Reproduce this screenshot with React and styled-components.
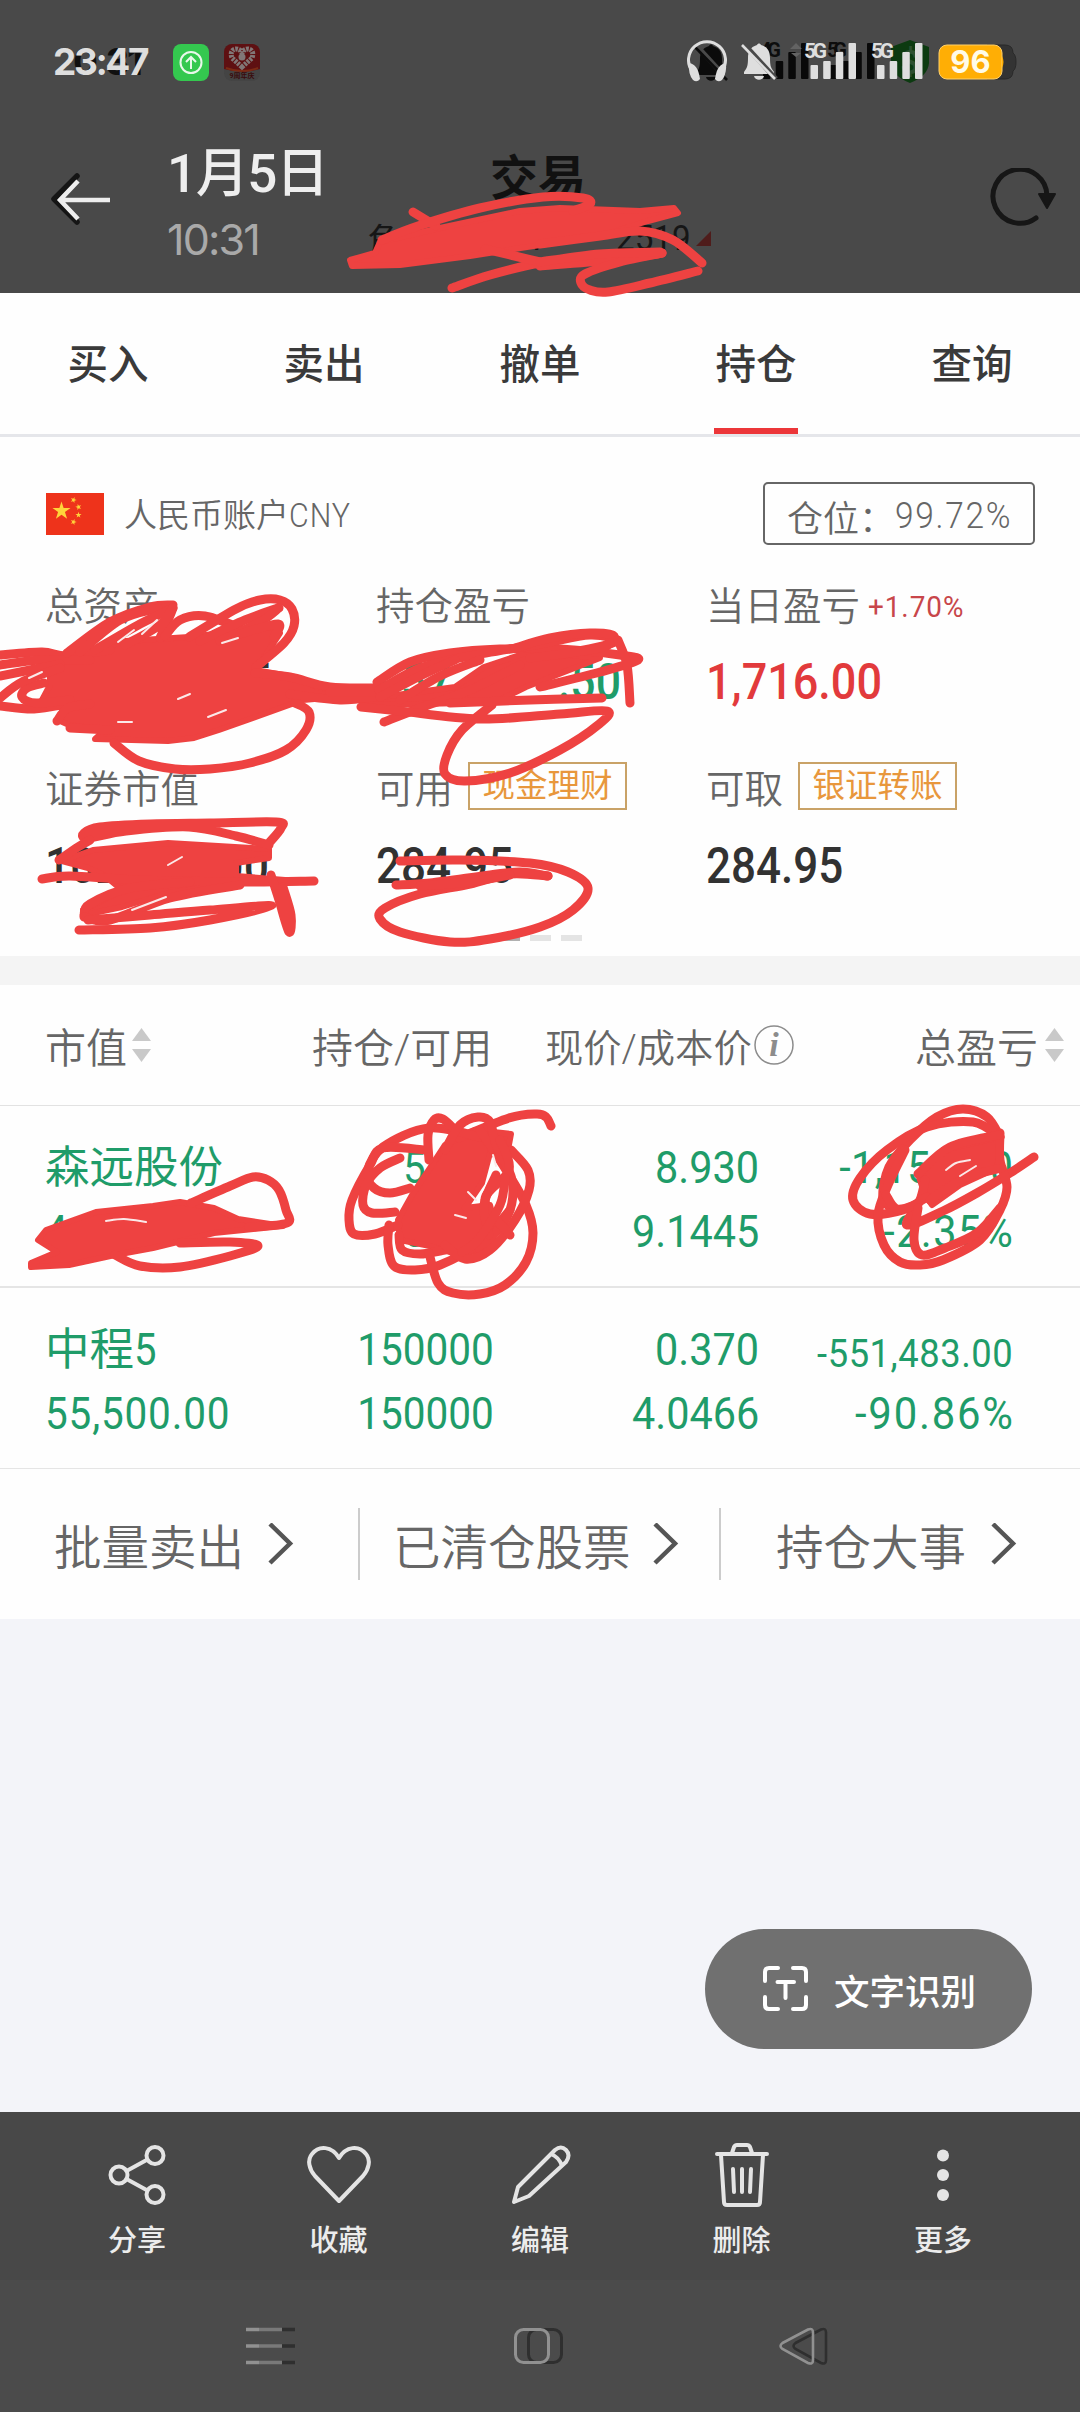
import React from 'react'
import styled, { createGlobalStyle } from 'styled-components'

const GlobalStyle = createGlobalStyle`
  * { box-sizing: border-box; }
  body {
    margin: 0;
    background: #f3f4f9;
    font-family: Roboto, 'Noto Sans CJK SC', sans-serif;
    color: #666;
  }
`;

const Phone = styled.div`
  position: relative;
  display: flex;
  flex-direction: column;
  width: 1080px;
  height: 2412px;
  overflow: hidden;
  background: #f3f4f9;
`;

const TopArea = styled.header`
  height: 293px;
  background: #494949;
`;

const StatusBar = styled.div`
  display: flex;
  align-items: center;
  height: 100px;
  padding: 24px 0 0 53px;
`;

const Clock = styled.div`
  position: relative;
  width: 120px;
  height: 50px;
  font: 700 37px/50px Inter, Roboto, sans-serif;
  letter-spacing: -2.4px;
  color: #dedede;
`;

const ClockShadow = styled.span`
  position: absolute;
  left: 20px;
  top: 0;
  color: #101010;
`;

const ClockFront = styled.span`
  position: relative;
`;

const AppIcon = styled.svg`
  display: block;
  margin-right: 15px;
`;

const StatusIcons = styled.svg`
  display: block;
  margin: 0 57px 0 auto;
`;

const TitleBar = styled.div`
  display: flex;
  height: 193px;
`;

const BackIcon = styled.svg`
  margin: 70px 0 0 48px;
`;

const DateBox = styled.div`
  width: 200px;
  margin: 44px 0 0 50px;
`;

const DateText = styled.div`
  font-size: 53px;
  font-weight: 500;
  line-height: 60px;
  letter-spacing: -1.4px;
  color: #eee;
  white-space: nowrap;
`;

const TimeText = styled.div`
  margin-top: 9px;
  font: 400 43px/52px Inter, Roboto, sans-serif;
  letter-spacing: -1.8px;
  color: #a9a9a9;
`;

const TitleBox = styled.div`
  width: 350px;
  margin: 51px 0 0 0;
`;

const Title = styled.div`
  padding-left: 123px;
  font-size: 48px;
  font-weight: 700;
  line-height: 56px;
  color: #111;
`;

const AccountNo = styled.div`
  display: flex;
  align-items: center;
  height: 50px;
  margin-top: 6px;
  font-size: 35px;
  font-weight: 400;
  color: #161616;
`;

const AccountPart = styled.span`
  width: ${(p) => p.$w}px;
  white-space: nowrap;
`;

const RefreshIcon = styled.svg`
  margin: 68px 0 0 273px;
`;

const Tabs = styled.nav`
  display: grid;
  grid-template-columns: repeat(5, 1fr);
  height: 144px;
  background: #fefefe;
  border-bottom: 3px solid #e5e6ea;
`;

const Tab = styled.div`
  display: flex;
  flex-direction: column;
  align-items: center;
  padding-top: 46px;
  font-size: 40.5px;
  font-weight: 500;
  line-height: 52px;
  color: #3a3a3a;
  &::after {
    content: '';
    width: 84px;
    height: 6px;
    margin-top: auto;
    background: ${(p) => (p.$active ? '#ec3639' : 'transparent')};
  }
`;

const Account = styled.section`
  height: 519px;
  padding: 45px 45px 0 46px;
  background: #fefefe;
`;

const AccountHead = styled.div`
  display: flex;
  align-items: center;
  height: 63px;
`;

const Currency = styled.span`
  margin: 4px auto 0 20px;
  font-size: 33px;
  line-height: 40px;
  font-weight: 350;
`;

const Position = styled.div`
  display: flex;
  align-items: center;
  width: 272px;
  height: 63px;
  padding: 4px 0 0 22px;
  border: 2px solid #666;
  border-radius: 5px;
  font-size: 36px;
  font-weight: 350;
  white-space: nowrap;
`;

const Figures = styled.div`
  display: grid;
  grid-template-columns: 331px 330px 1fr;
  grid-template-rows: 42px 115px 94px 65px;
  margin-left: -1px;
  padding-top: 37px;
`;

const Label = styled.div`
  display: flex;
  align-items: center;
  font-size: 38.5px;
  font-weight: 350;
  white-space: nowrap;
`;

const Change = styled.span`
  margin: 6px 0 0 8px;
  font-size: 30px;
  font-weight: 400;
  color: #c8464a;
`;

const Badge = styled.span`
  width: 159px;
  height: 48px;
  margin-left: 15px;
  border: 2px solid #c9a267;
  font-size: 32.5px;
  font-weight: 400;
  line-height: 45px;
  text-align: center;
  color: #e8973c;
`;

const Value = styled.div`
  display: flex;
  align-items: center;
  font-size: 50px;
  font-weight: 500;
  color: ${(p) => p.$color || '#323232'};
  white-space: pre;
`;

// narrow figures, squeezed towards the edge they are aligned to
const Num = styled.span`
  display: inline-block;
  letter-spacing: ${(p) => p.$gap || 0}px;
  margin-right: -${(p) => p.$gap || 0}px;
  transform: scaleX(${(p) => p.$x || 0.89});
  transform-origin: ${(p) => p.$from || 'left'} center;
`;

const Digits = styled.span`
  width: ${(p) => p.$w}px;
`;

const Pager = styled.div`
  display: flex;
  justify-content: center;
  gap: 10px;
  margin-top: 37px;
  span {
    width: 21px;
    height: 6px;
    background: #e4e4e4;
  }
  span:first-child { background: #b0b0b0; }
`;

const Gap = styled.div`
  height: 29px;
  background: #f4f4f4;
`;

const TableHead = styled.div`
  display: grid;
  grid-template-columns: 267px 233px 370px 1fr;
  align-items: center;
  height: 121px;
  padding-left: 45px;
  background: #fefefe;
  border-bottom: 1px solid #e2e2e2;
  font-size: 41px;
  font-weight: 350;
`;

const HeadCell = styled.div`
  display: flex;
  align-items: center;
  font-size: ${(p) => p.$size || 41}px;
  white-space: nowrap;
  svg { margin-left: ${(p) => p.$gap || 4}px; }
`;

const HoldingRow = styled.div`
  display: grid;
  grid-template-columns: 230px 219px 265px 254px;
  grid-template-rows: 64px 64px;
  align-items: center;
  height: ${(p) => p.$h}px;
  padding: ${(p) => p.$top}px 0 0 45px;
  background: #fefefe;
  border-bottom: ${(p) => p.$line}px solid #e5e5e5;
  font-size: 45px;
  line-height: 64px;
  color: #1f9c69;
`;

const Cell = styled.div`
  padding-top: ${(p) => p.$drop || 0}px;
  text-align: ${(p) => p.$align || 'right'};
  font-size: ${(p) => p.$size || 45}px;
  white-space: pre;
`;

const Links = styled.div`
  display: flex;
  align-items: center;
  height: 150px;
  background: #fefefe;
`;

const LinkItem = styled.div`
  display: flex;
  align-items: center;
  justify-content: space-between;
  width: ${(p) => p.$w}px;
  height: 72px;
  padding: 0 ${(p) => p.$right}px 0 ${(p) => p.$left}px;
  border-right: ${(p) => (p.$last ? 0 : 2)}px solid #ccc;
  font-size: 47.5px;
  font-weight: 350;
  white-space: nowrap;
`;

const OcrButton = styled.div`
  position: absolute;
  left: 705px;
  top: 1929px;
  display: flex;
  align-items: center;
  width: 327px;
  height: 120px;
  padding-left: 57px;
  border-radius: 60px;
  background: #707070;
  color: #fff;
  font-size: 35.5px;
  font-weight: 500;
  span { margin: 0 0 0 25px; }
`;

const Toolbar = styled.div`
  display: grid;
  grid-template-columns: repeat(5, 201.5px);
  justify-content: center;
  height: 168px;
  margin-top: auto;
  background: #484848;
`;

const Tool = styled.div`
  display: flex;
  flex-direction: column;
  align-items: center;
  padding-top: 28px;
  font-size: 29px;
  font-weight: 500;
  line-height: 36px;
  color: #ececec;
  svg { margin-bottom: 15px; }
`;

const NavBar = styled.div`
  display: flex;
  align-items: center;
  height: 132px;
  padding-left: 240px;
  background: #4b4b4b;
`;

const NavIcon = styled.svg`
  margin-right: ${(p) => p.$gap || 0}px;
`;

const Scribbles = styled.svg`
  position: absolute;
  left: 0;
  top: 0;
  pointer-events: none;
`;

const RED = '#e23a3c';
const INK = '#ee4241';

const tabs = ['买入', '卖出', '撤单', '持仓', '查询'];

// smooth curve through a flat list of x, y
const curve = (p) => {
  const pt = (i) => {
    const n = Math.max(0, Math.min(p.length / 2 - 1, i));
    return [p[n * 2], p[n * 2 + 1]];
  };
  let d = `M${p[0]} ${p[1]}`;
  for (let i = 0; i < p.length / 2 - 1; i++) {
    const [a, b, c, e] = [pt(i - 1), pt(i), pt(i + 1), pt(i + 2)];
    d += `C${b[0] + (c[0] - a[0]) / 6} ${b[1] + (c[1] - a[1]) / 6} ${c[0] - (e[0] - b[0]) / 6} ${c[1] - (e[1] - b[1]) / 6} ${c[0]} ${c[1]}`;
  }
  return d;
};

const pen = [
  // account number
  [413, 212, 436, 226],
  [382, 240, 418, 226, 480, 208, 543, 197, 583, 198, 590, 204, 573, 211],
  [540, 244, 600, 236, 640, 231, 673, 240, 702, 263],
  [452, 288, 490, 275, 540, 263, 600, 256, 662, 253, 610, 260, 540, 266],
  [662, 253, 620, 262, 585, 274, 581, 283, 590, 290, 608, 292, 650, 283, 698, 271],
  [485, 249, 540, 262],
  [540, 262, 600, 254, 660, 252],
  // total assets
  [0, 655, 42, 652, 67, 656, 110, 650],
  [0, 665, 40, 660, 90, 660],
  [0, 676, 60, 664],
  [0, 706, 34, 709, 67, 704],
  [44, 683, 27, 688, 22, 697, 36, 703, 70, 700],
  [0, 698, 22, 682, 60, 668],
  [67, 653, 110, 622, 150, 607, 173, 605],
  [80, 652, 120, 620, 158, 608],
  [95, 650, 140, 624, 173, 608],
  [125, 645, 160, 625, 173, 608, 160, 638],
  [165, 636, 180, 620, 205, 616, 240, 628],
  [189, 637, 236, 609, 260, 600, 280, 600, 292, 609, 294, 626, 284, 643, 256, 667],
  [200, 641, 245, 620, 278, 608],
  [220, 641, 260, 622, 279, 608],
  [240, 634, 278, 624, 274, 637],
  [114, 743, 139, 761, 175, 769, 210, 769, 250, 763, 286, 750, 306, 730, 309, 712, 295, 703],
  [255, 673, 290, 677, 330, 687, 379, 688],
  [290, 694, 340, 700, 380, 696],
  [330, 692, 380, 692],
  [57, 721, 68, 708, 90, 704],
  [70, 728, 110, 730],
  // floating profit
  [377, 682, 410, 662, 450, 653, 500, 649, 560, 649, 620, 655, 638, 660, 600, 672, 540, 687],
  [379, 690, 420, 668, 470, 656, 540, 644, 590, 635, 615, 642, 560, 655],
  [515, 648, 550, 638, 590, 633, 614, 636, 600, 648, 530, 658],
  [384, 722, 420, 708, 470, 690, 520, 665],
  [380, 697, 420, 676, 455, 660],
  [400, 700, 440, 676, 480, 660],
  [618, 640, 627, 665, 630, 703],
  [361, 707, 400, 711, 480, 719, 560, 714, 607, 711, 598, 725, 560, 750, 510, 773, 465, 781, 445, 774, 447, 755, 462, 730, 492, 705],
  [450, 703, 530, 700, 602, 698],
  // market value
  [269, 845, 236, 836, 189, 827, 126, 831, 88, 838, 84, 833, 100, 827, 150, 824, 210, 823, 276, 822, 281, 828, 269, 843],
  [59, 860, 78, 847, 90, 840],
  [42, 879, 70, 876, 140, 880, 240, 882, 314, 881],
  [84, 915, 90, 904, 130, 888, 190, 882],
  [84, 917, 110, 920, 170, 898, 240, 885],
  [88, 920, 150, 915, 210, 910, 272, 906, 210, 920, 150, 928, 79, 930],
  [271, 875, 279, 900, 289, 932, 291, 915, 283, 887],
  // available
  [400, 861, 460, 860, 530, 863, 568, 872, 588, 888, 573, 910, 540, 927, 490, 939, 450, 942, 400, 932, 380, 919, 385, 908, 420, 894, 470, 884, 510, 874, 548, 876],
  [396, 885, 430, 883, 490, 875, 520, 872, 548, 876],
  [420, 886, 470, 882, 510, 875],
  // first holding
  [191, 1203, 230, 1186, 253, 1177, 268, 1180, 279, 1190, 286, 1210, 287, 1223, 249, 1227],
  [115, 1255, 140, 1266, 180, 1267, 230, 1256, 258, 1246, 230, 1242, 180, 1243],
  // quantity
  [551, 1126, 546, 1117, 536, 1114, 509, 1118, 459, 1138],
  [480, 1137, 429, 1128, 383, 1147, 367, 1173, 374, 1188, 390, 1193, 410, 1188],
  [425, 1150, 383, 1148, 370, 1165, 352, 1200, 349, 1220, 354, 1234, 375, 1234, 398, 1225],
  [400, 1158, 380, 1168, 366, 1185, 363, 1205, 372, 1213, 395, 1212],
  [389, 1225, 388, 1245, 394, 1266, 415, 1270, 440, 1265, 480, 1243, 510, 1210],
  [399, 1235, 402, 1250, 420, 1254, 445, 1250],
  [429, 1253, 438, 1283, 453, 1293, 480, 1294, 505, 1285, 526, 1262, 533, 1233, 526, 1205, 506, 1170, 480, 1130],
  [429, 1160, 428, 1135, 434, 1120, 443, 1119, 455, 1130],
  [445, 1150, 460, 1125, 478, 1117, 490, 1122, 496, 1145, 512, 1180, 508, 1215, 480, 1250],
  [511, 1150, 528, 1170, 529, 1190, 515, 1220, 490, 1250, 465, 1259, 445, 1245],
  [500, 1140, 509, 1170, 485, 1200, 510, 1235],
  [496, 1175, 484, 1205, 489, 1235],
  [505, 1178, 500, 1205, 478, 1240, 462, 1252],
  // first holding profit
  [1034, 1157, 1010, 1173, 977, 1193, 943, 1211, 907, 1225, 920, 1200, 925, 1180],
  [1000, 1137, 987, 1117, 963, 1109, 937, 1117, 910, 1140, 889, 1167, 883, 1198, 895, 1211],
  [1000, 1137, 973, 1122, 927, 1127, 887, 1150, 860, 1178, 853, 1200, 870, 1214, 903, 1210, 927, 1197],
  [905, 1150, 888, 1185, 878, 1215, 884, 1245, 900, 1262, 920, 1265, 943, 1260, 980, 1240, 1000, 1210, 1007, 1187, 1000, 1160, 1000, 1133],
  [886, 1195, 897, 1209, 918, 1204],
  [918, 1208, 914, 1240, 922, 1255, 945, 1248, 977, 1233, 1000, 1208],
  [918, 1174, 950, 1147, 998, 1135],
  [930, 1200, 965, 1178, 1002, 1168],
];

const solid = [
  '380,242 440,228 520,211 560,208 640,211 674,208 678,213 648,221 600,236 540,245 470,256 400,265 352,266 350,260 375,253',
  '50,662 126,641 189,637 274,627 280,633 269,650 255,670 295,677 320,688 375,690 379,697 337,697 303,700 253,718 219,730 194,738 168,741 95,739 105,730 69,725 58,720 67,710 42,700 50,685',
  '455,687 484,667 526,653 570,655 600,658 526,687 500,700 463,703 379,705 362,703 382,697',
  '62,861 93,850 168,843 269,849 269,858 236,863 236,876 310,882 236,883 168,893 122,907 84,915 83,910 122,890 105,876 88,868',
  '46,1230 96,1212 153,1206 180,1202 214,1208 238,1219 283,1226 214,1233 153,1248 115,1255 69,1265 31,1267 31,1263 57,1252 38,1240',
  '445,1145 475,1130 511,1134 508,1150 490,1153 482,1183 465,1208 490,1205 495,1225 480,1250 459,1255 430,1246 400,1240 398,1220 412,1195 430,1168',
  '918,1174 943,1150 995,1138 1000,1150 997,1168 960,1185 932,1205 925,1195',
];

// slivers of paper left between the strokes
const gaps = [
  [118, 642, 134, 630],
  [142, 634, 157, 620],
  [222, 643, 238, 638],
  [178, 699, 190, 694],
  [118, 722, 132, 722],
  [29, 678, 42, 672],
  [208, 717, 226, 710],
  [132, 910, 166, 897],
  [168, 865, 182, 857],
  [106, 1221, 124, 1219, 146, 1222],
  [468, 1192, 476, 1200],
  [493, 1155, 496, 1166],
  [455, 1215, 466, 1218],
  [946, 1170, 956, 1163, 970, 1160],
  [960, 1176, 976, 1166],
];

const Sort = () => (
  <svg width="19" height="34" viewBox="0 0 19 34" fill="#c9c9c9">
    <path d="M9.500 0L19 13H0z" />
    <path d="M0 21h19L9.500 34z" />
  </svg>
)

const Chevron = () => (
  <svg width="26" height="42" viewBox="0 0 26 42" fill="none" stroke="#555" strokeWidth="4.500">
    <path d="M2 1L22 20.500L2 40" />
  </svg>
)

const Star = ({ x, y, s, r = 0 }) => (
  <path
    transform={`translate(${x} ${y}) rotate(${r}) scale(${s})`}
    d="M0-1L.225-.309H.951L.363.118L.588.809L0 .382L-.588.809L-.363.118L-.951-.309H-.225z"
  />
)

const Bars = ({ x, fill }) => (
  <g fill={fill}>
    <rect x={x} y="26" width="7.500" height="14" rx="1" />
    <rect x={x + 12.700} y="22" width="7.500" height="18" rx="1" />
    <rect x={x + 25.300} y="13" width="7.500" height="27" rx="1" />
    <rect x={x + 38} y="4" width="7.500" height="36" rx="1" />
  </g>
)

const Bell = ({ fill, line }) => (
  <g>
    <path fill={fill} d="M15 2C8 4 6 9 6 15c0 8-1 10-4 14v2h30v-2c-3-4-4-6-4-14c0-6-2-11-9-13c-1-2-3-2-4 0zM12 33h10c-1 5-9 5-10 0z" />
    <path d="M1 0L34 36" stroke="#494949" strokeWidth="5" />
    <path d="M0 2L33 36" stroke={line} strokeWidth="2.600" />
  </g>
)

const App = () => {
  return (
    <Phone>
      <GlobalStyle />
      <TopArea>
        <StatusBar>
          <Clock>
            <ClockShadow>0:31</ClockShadow>
            <ClockFront>23:47</ClockFront>
          </Clock>
          <AppIcon width="36" height="37" viewBox="0 0 36 37">
            <rect width="36" height="37" rx="8" fill="#34c84f" />
            <g fill="none" stroke="#e8f8ea" strokeWidth="2">
              <circle cx="18" cy="18.500" r="10.500" />
              <path d="M18 25V13M13 18l5-5l5 5" />
            </g>
          </AppIcon>
          <AppIcon width="36" height="37" viewBox="0 0 36 37">
            <rect width="36" height="37" rx="8" fill="#444" />
            <path d="M0 25V8a8 8 0 0 1 8-8h20a8 8 0 0 1 8 8v17q-18 5-36 0z" fill="#5e1012" />
            <path d="M2 24q16 6 32 0" stroke="#7c2a14" strokeWidth="2" fill="none" />
            <path d="M18 23L8 14C6 9 8 5 12 5q4 0 6 4q2-4 6-4c4 0 6 4 4 9z" fill="none" stroke="#817777" strokeWidth="5" strokeDasharray="2.500 1" />
            <circle cx="18" cy="13" r="3.500" fill="#817777" />
            <text x="18" y="34" fontSize="7" fontWeight="700" textAnchor="middle" fill="#3a0b0c">9周年庆</text>
          </AppIcon>
          <StatusIcons width="336" height="46" viewBox="0 0 336 46">
            <g transform="translate(7 5)"><Bell fill="#0b0b0b" line="#0b0b0b" /></g>
            <g fontFamily="Roboto" fontWeight="700" fontSize="20" fill="#0d0d0d">
              <text x="73" y="18" textLength="21">4G</text>
              <text x="140" y="18" textLength="20">5G</text>
            </g>
            <Bars x={76} fill="#090909" />
            <Bars x={142} fill="#090909" />
            <path d="M103 10l6-6l6 6zM104 14h10l-5 4z" fill="#636363" />
            <path d="M223 1l19 7v16q-1 13-19 20q-18-7-19-20V8z" fill="#0c3a10" />
            <text x="223" y="35" fontSize="34" fontWeight="700" textAnchor="middle" fill="#2d5030">$</text>
            <path d="M5 32a18.500 18.500 0 1 1 30 0" fill="none" stroke="#dedede" strokeWidth="3" />
            <path d="M2 24q9 1 11 16q-3 4-7 1q-5-6-4-17zM39 24q-9 1-11 16q3 4 7 1q5-6 4-17z" fill="#dedede" />
            <g transform="translate(55 4)"><Bell fill="#dedede" line="#dedede" /></g>
            <g fontFamily="Roboto" fontWeight="700" fontSize="21" fill="#dedede">
              <text x="117" y="19" textLength="23">5G</text>
              <text x="184" y="19" textLength="23">5G</text>
            </g>
            <Bars x={123.500} fill="#dedede" />
            <Bars x={190} fill="#dedede" />
            <path d="M300 6h18q8 0 8 8q3 2 3 9t-3 9q0 8-8 8h-18z" fill="#333" stroke="#292929" />
            <rect x="252" y="6" width="63" height="34" rx="8" fill="#ffae05" stroke="#ffd06a" />
            <path d="M315 17q3 6 0 12z" fill="#ffae05" />
            <text x="283.500" y="34" fontFamily="Inter" fontSize="31" fontWeight="700" textAnchor="middle" fill="#fffbe8">96</text>
          </StatusIcons>
        </StatusBar>
        <TitleBar>
          <BackIcon width="69" height="58" viewBox="0 0 69 58" fill="none">
            <path d="M29 6L6 29L29 52" stroke="#151515" strokeWidth="5.500" strokeLinecap="round" strokeLinejoin="round" />
            <path d="M30 11L12 30L30 49M12 30H62" stroke="#eee" strokeWidth="4.500" />
          </BackIcon>
          <DateBox>
            <DateText>1月5日</DateText>
            <TimeText>10:31</TimeText>
          </DateBox>
          <TitleBox>
            <Title>交易</Title>
            <AccountNo>
              <AccountPart $w={139}>角</AccountPart>
              <AccountPart $w={110}>51</AccountPart>
              <AccountPart $w={80}><Num $x={0.95}>2519</Num></AccountPart>
              <svg width="15" height="15"><path d="M15 0V15H0z" fill="#4f1c1b" /></svg>
            </AccountNo>
          </TitleBox>
          <RefreshIcon width="70" height="66" viewBox="0 0 70 66">
            <path d="M57 28A27 27 0 1 0 46 50" fill="none" stroke="#161616" strokeWidth="5" strokeLinecap="round" />
            <path d="M49 26H65L57 40z" fill="#161616" stroke="#161616" strokeWidth="2" strokeLinejoin="round" />
          </RefreshIcon>
        </TitleBar>
      </TopArea>

      <Tabs>
        {tabs.map((item) => (
          <Tab key={item} $active={item === '持仓'}>{item}</Tab>
        ))}
      </Tabs>

      <Account>
        <AccountHead>
          <svg width="58" height="42" viewBox="0 0 58 42">
            <rect width="58" height="42" fill="#ee331b" />
            <g fill="#ffd43a">
              <Star x={15.500} y={18} s={9.500} />
              <Star x={27.500} y={7} s={3.200} r={20} />
              <Star x={32.500} y={14} s={3.200} r={-15} />
              <Star x={32.500} y={22} s={3.200} />
              <Star x={27.500} y={29} s={3.200} r={20} />
            </g>
          </svg>
          <Currency>人民币账户<Num $x={0.92} $gap={1}>CNY</Num></Currency>
          <Position>仓位：<Num $x={0.93} $gap={1.800}>99.72%</Num></Position>
        </AccountHead>
        <Figures>
          <Label>总资产</Label>
          <Label>持仓盈亏</Label>
          <Label>当日盈亏<Change><Num $x={0.93} $gap={1}>+1.70%</Num></Change></Label>
          <Value>
            <Digits $w={84}><Num>1</Num></Digits>
            <Digits $w={117}><Num>5</Num></Digits>
            <Num>5</Num>
          </Value>
          <Value $color="#1f9c69">
            <Digits $w={25}><Num>-</Num></Digits>
            <Digits $w={157}><Num>57,</Num></Digits>
            <Num>.50</Num>
          </Value>
          <Value $color={RED}><Num $x={0.9}>1,716.00</Num></Value>
          <Label>证券市值</Label>
          <Label>可用<Badge>现金理财</Badge></Label>
          <Label>可取<Badge>银证转账</Badge></Label>
          <Value>
            <Digits $w={161}><Num>102,</Num></Digits>
            <Num>.00</Num>
          </Value>
          <Value><Num $x={0.88}>284.95</Num></Value>
          <Value><Num $x={0.88}>284.95</Num></Value>
        </Figures>
        <Pager><span /><span /><span /></Pager>
      </Account>

      <Gap />

      <TableHead>
        <HeadCell $gap={5}>市值<Sort /></HeadCell>
        <HeadCell>持仓/可用</HeadCell>
        <HeadCell $gap={2} $size={38.3}>
          现价/成本价
          <svg width="40" height="40" viewBox="0 0 40 40">
            <circle cx="20" cy="20" r="19" fill="none" stroke="#8c8c8c" strokeWidth="1.500" />
            <text x="20" y="31" fontFamily="Liberation Serif" fontStyle="italic" fontWeight="700" fontSize="34" textAnchor="middle" fill="#8c8c8c">i</text>
          </svg>
        </HeadCell>
        <HeadCell $gap={7}>总盈亏<Sort /></HeadCell>
      </TableHead>
      <HoldingRow $h={182} $top={30} $line={2}>
        <Cell $align="left" $size={44.5}>森远股份</Cell>
        <Cell><Num $x={0.9} $from="right">{'5\u2007\u2007\u2007'}</Num></Cell>
        <Cell><Num $x={0.92} $from="right">8.930</Num></Cell>
        <Cell><Num $x={0.92} $gap={0.500} $from="right">{'-1,15\u2007.\u20070'}</Num></Cell>
        <Cell $align="left"><Num $x={0.9}>4</Num></Cell>
        <Cell><Num $x={0.9} $from="right">{'5\u20070\u2007'}</Num></Cell>
        <Cell><Num $x={0.92} $from="right">9.1445</Num></Cell>
        <Cell><Num $x={0.92} $gap={1.500} $from="right">-2.35%</Num></Cell>
      </HoldingRow>
      <HoldingRow $h={181} $top={30} $line={1}>
        <Cell $align="left" $size={44.5}>中程<Num $x={0.9}>5</Num></Cell>
        <Cell><Num $x={0.9} $from="right">150000</Num></Cell>
        <Cell><Num $x={0.92} $from="right">0.370</Num></Cell>
        <Cell $size={39.5} $drop={7}><Num $x={0.92} $gap={0.600} $from="right">-551,483.00</Num></Cell>
        <Cell $align="left"><Num $x={0.9} $gap={0.900}>55,500.00</Num></Cell>
        <Cell><Num $x={0.9} $from="right">150000</Num></Cell>
        <Cell><Num $x={0.92} $from="right">4.0466</Num></Cell>
        <Cell><Num $x={0.93} $gap={1.900} $from="right">-90.86%</Num></Cell>
      </HoldingRow>

      <Links>
        <LinkItem $w={360} $left={54} $right={64}>批量卖出<Chevron /></LinkItem>
        <LinkItem $w={361} $left={33} $right={40}>已清仓股票<Chevron /></LinkItem>
        <LinkItem $w={359} $left={55} $right={63} $last>持仓大事<Chevron /></LinkItem>
      </Links>

      <OcrButton>
        <svg width="47" height="46" viewBox="0 0 47 46" fill="none" stroke="#fff" strokeWidth="4" strokeLinecap="round">
          <path d="M3 15V6q0-4 4-4H16M31 2H40q4 0 4 4V15M44 31V39q0 4-4 4H31M16 43H7q-4 0-4-4V31M15.500 16H32M23.500 16V32" />
        </svg>
        <span>文字识别</span>
      </OcrButton>

      <Toolbar>
        <Tool>
          <svg width="64" height="68" viewBox="0 0 64 68" fill="none" stroke="#e4e4e4" strokeWidth="4">
            <circle cx="14" cy="35" r="8.500" />
            <circle cx="50" cy="15.500" r="8.500" />
            <circle cx="50" cy="54.500" r="8.500" />
            <path d="M21.500 31L42.500 19.500M21.500 39L42.500 50.500" />
          </svg>
          分享
        </Tool>
        <Tool>
          <svg width="68" height="68" viewBox="0 0 68 68" fill="none" stroke="#e4e4e4" strokeWidth="4" strokeLinejoin="round">
            <path d="M34 61L10 36C4 29 2 20 7 14C14 5 27 6 34 18C41 6 54 5 61 14C66 20 64 29 58 36z" />
          </svg>
          收藏
        </Tool>
        <Tool>
          <svg width="64" height="68" viewBox="0 0 64 68" fill="none" stroke="#e4e4e4" strokeWidth="4" strokeLinejoin="round">
            <path d="M6 62L10 47L47 10q6-5 11 0t0 12L21 56zM43 14q8 3 11 12" />
          </svg>
          编辑
        </Tool>
        <Tool>
          <svg width="60" height="68" viewBox="0 0 60 68" fill="none" stroke="#e4e4e4" strokeWidth="4" strokeLinecap="round" strokeLinejoin="round">
            <path d="M5 14H55M20 13L22 7q1-2 3-2H35q2 0 3 2L40 13M9 15L12 62q0 3 3 3H45q3 0 3-3L51 15M21 29L22 52M30 29V52M39 29L38 52" />
          </svg>
          删除
        </Tool>
        <Tool>
          <svg width="60" height="68" viewBox="0 0 60 68" fill="#e4e4e4">
            <circle cx="30" cy="15.500" r="6" />
            <circle cx="30" cy="35" r="6" />
            <circle cx="30" cy="55" r="6" />
          </svg>
          更多
        </Tool>
      </Toolbar>

      <NavBar>
        <NavIcon width="60" height="48" viewBox="0 0 60 48" strokeWidth="3.500" $gap={208}>
          <path d="M42 7.500H55M42 24H55M42 40.500H55" stroke="#2f2f2f" />
          <path d="M19 7.500H42M19 24H42M19 40.500H42" stroke="#797979" />
          <path d="M6 7.500H19M6 24H19M6 40.500H19" stroke="#919191" />
        </NavIcon>
        <NavIcon width="60" height="48" viewBox="0 0 60 48" fill="none" strokeWidth="3" $gap={206}>
          <rect x="20.500" y="7.500" width="33" height="33" rx="8" stroke="#2f2f2f" />
          <rect x="7.500" y="7.500" width="33" height="33" rx="8" stroke="#919191" />
        </NavIcon>
        <NavIcon width="60" height="48" viewBox="0 0 60 48" fill="none" strokeWidth="2.600">
          <path d="M21.500 21L47 7.500q5-2 5 3V38q0 5-5 3L21.500 27q-4-3 0-6z" stroke="#2f2f2f" />
          <path d="M8.500 21L34 7.500q5-2 5 3V38q0 5-5 3L8.500 27q-4-3 0-6z" stroke="#919191" />
        </NavIcon>
      </NavBar>

      <Scribbles width="1080" height="2412" viewBox="0 0 1080 2412">
        <g fill={INK} stroke={INK} strokeWidth="6" strokeLinejoin="round">
          {solid.map((item, i) => <polygon key={i} points={item} />)}
        </g>
        <g fill="none" stroke={INK} strokeWidth="9" strokeLinecap="round" strokeLinejoin="round">
          {pen.map((item, i) => <path key={i} d={curve(item)} />)}
        </g>
        <g fill="none" stroke="#fbe9e9" strokeWidth="2" strokeLinecap="round">
          {gaps.map((item, i) => <path key={i} d={curve(item)} />)}
        </g>
      </Scribbles>
    </Phone>
  )
}

export default App
